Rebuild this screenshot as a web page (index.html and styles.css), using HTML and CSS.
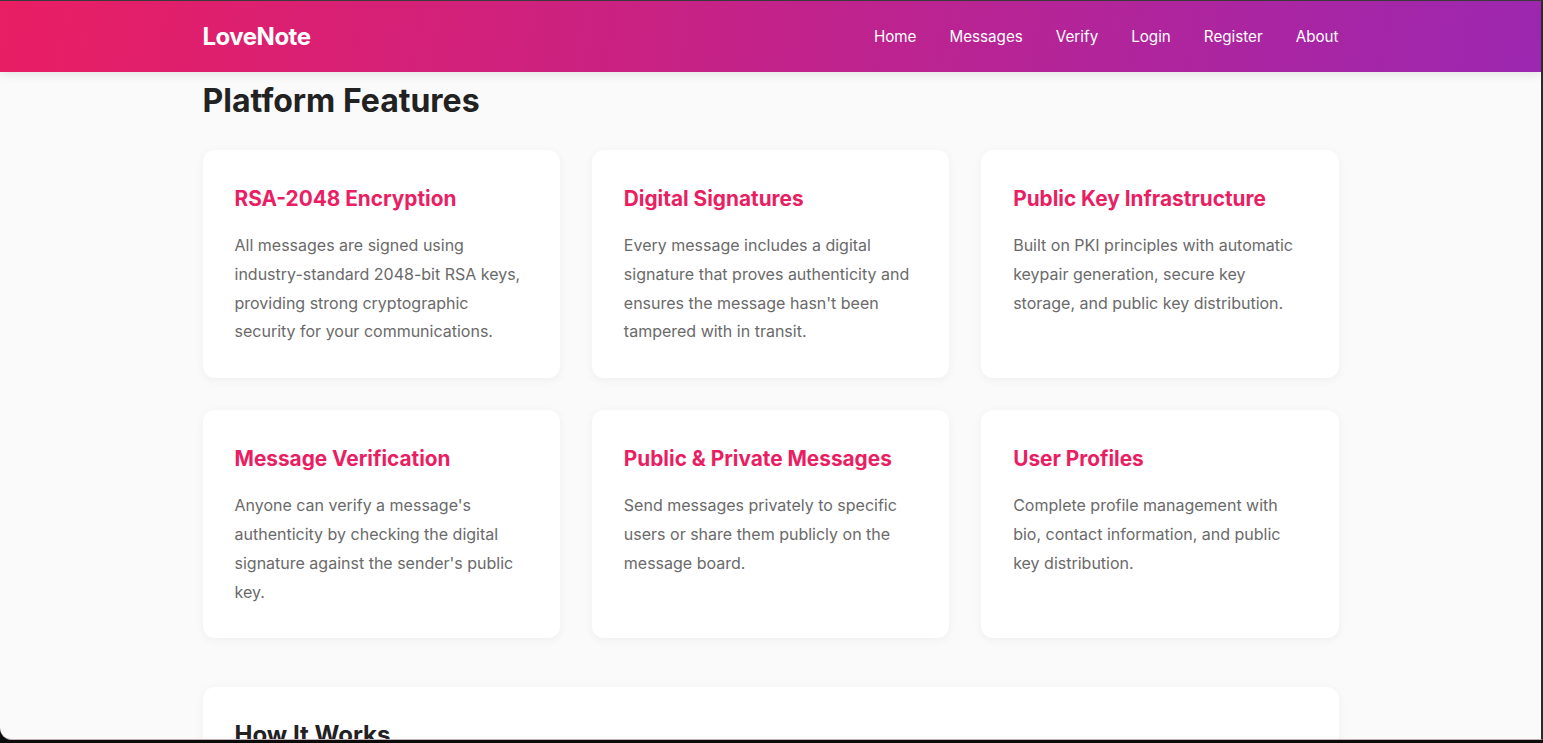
FILE: index.html
```html
<!DOCTYPE html>
<html lang="en">
<head>
<meta charset="utf-8">
<title>LoveNote - Platform Features</title>
<link rel="stylesheet" href="styles.css">
</head>
<body>
<div class="screen">
  <header class="navbar">
    <div class="container nav-inner">
      <a class="logo" href="#">LoveNote</a>
      <nav class="nav-links">
        <a href="#">Home</a>
        <a href="#">Messages</a>
        <a href="#">Verify</a>
        <a href="#">Login</a>
        <a href="#">Register</a>
        <a href="#">About</a>
      </nav>
    </div>
  </header>
  <main class="container main">
    <h2 class="section-title">Platform Features</h2>
    <div class="features">
      <div class="card">
        <h3>RSA-2048 Encryption</h3>
        <p>All messages are signed using industry-standard 2048-bit RSA keys, providing strong cryptographic security for your communications.</p>
      </div>
      <div class="card">
        <h3>Digital Signatures</h3>
        <p>Every message includes a digital signature that proves authenticity and ensures the message hasn't been tampered with in transit.</p>
      </div>
      <div class="card">
        <h3>Public Key Infrastructure</h3>
        <p>Built on PKI principles with automatic keypair generation, secure key storage, and public key distribution.</p>
      </div>
      <div class="card">
        <h3>Message Verification</h3>
        <p>Anyone can verify a message's authenticity by checking the digital signature against the sender's public key.</p>
      </div>
      <div class="card">
        <h3>Public &amp; Private Messages</h3>
        <p>Send messages privately to specific users or share them publicly on the message board.</p>
      </div>
      <div class="card">
        <h3>User Profiles</h3>
        <p>Complete profile management with bio, contact information, and public key distribution.</p>
      </div>
    </div>
    <section class="card how">
      <h2>How It Works</h2>
    </section>
  </main>
</div>
</body>
</html>
```
FILE: styles.css
```css
* { box-sizing: border-box; }
html, body {
  margin: 0;
  padding: 0;
  background: #0b0b0b;
}
body {
  font-family: Inter, "Noto Sans", "Liberation Sans", sans-serif;
  color: #222;
}
.screen {
  height: 740px;
  background: #fafafa;
  border-top: 1px solid #3a3a3a;
  border-right: 2px solid #2b2b2b;
  border-bottom: 1px solid #c6b0b2;
  border-bottom-left-radius: 12px;
  overflow: hidden;
}
.container {
  width: 1136px;
  margin: 0 auto;
}
.navbar {
  height: 71px;
  background: linear-gradient(100deg, #e91e63 0%, #9c27b0 100%);
  box-shadow: 0 2px 10px rgba(0,0,0,0.1);
  position: relative;
  z-index: 2;
}
.nav-inner {
  height: 100%;
  display: flex;
  align-items: center;
  justify-content: space-between;
}
.logo {
  color: #fff;
  text-decoration: none;
  font-weight: 700;
  font-size: 24px;
  letter-spacing: -0.5px;
  padding-bottom: 1px;
}
.nav-links {
  display: flex;
  gap: 33px;
}
.nav-links a {
  color: #fff;
  text-decoration: none;
  font-size: 15.2px;
  font-weight: 400;
}
.main {
  padding-top: 9px;
}
.section-title {
  margin: 0 0 30px;
  font-size: 32px;
  font-weight: 700;
  color: #222;
}
.features {
  display: grid;
  grid-template-columns: repeat(3, 1fr);
  gap: 32px;
}
.card {
  background: #fff;
  border-radius: 12px;
  padding: 32px;
  box-shadow: 0 2px 10px rgba(0,0,0,0.05);
}
.card h3 {
  margin: 0 0 16px;
  padding-top: 1px;
  color: #e91e63;
  font-size: 20.8px;
  line-height: 32px;
  font-weight: 700;
}
.card p {
  margin: 0;
  color: #6a6a6a;
  font-size: 16px;
  line-height: 1.8;
}
.how {
  margin-top: 49px;
  padding-top: 33px;
}
.how h2 {
  margin: 0;
  font-size: 24px;
  font-weight: 700;
  color: #222;
}
```
